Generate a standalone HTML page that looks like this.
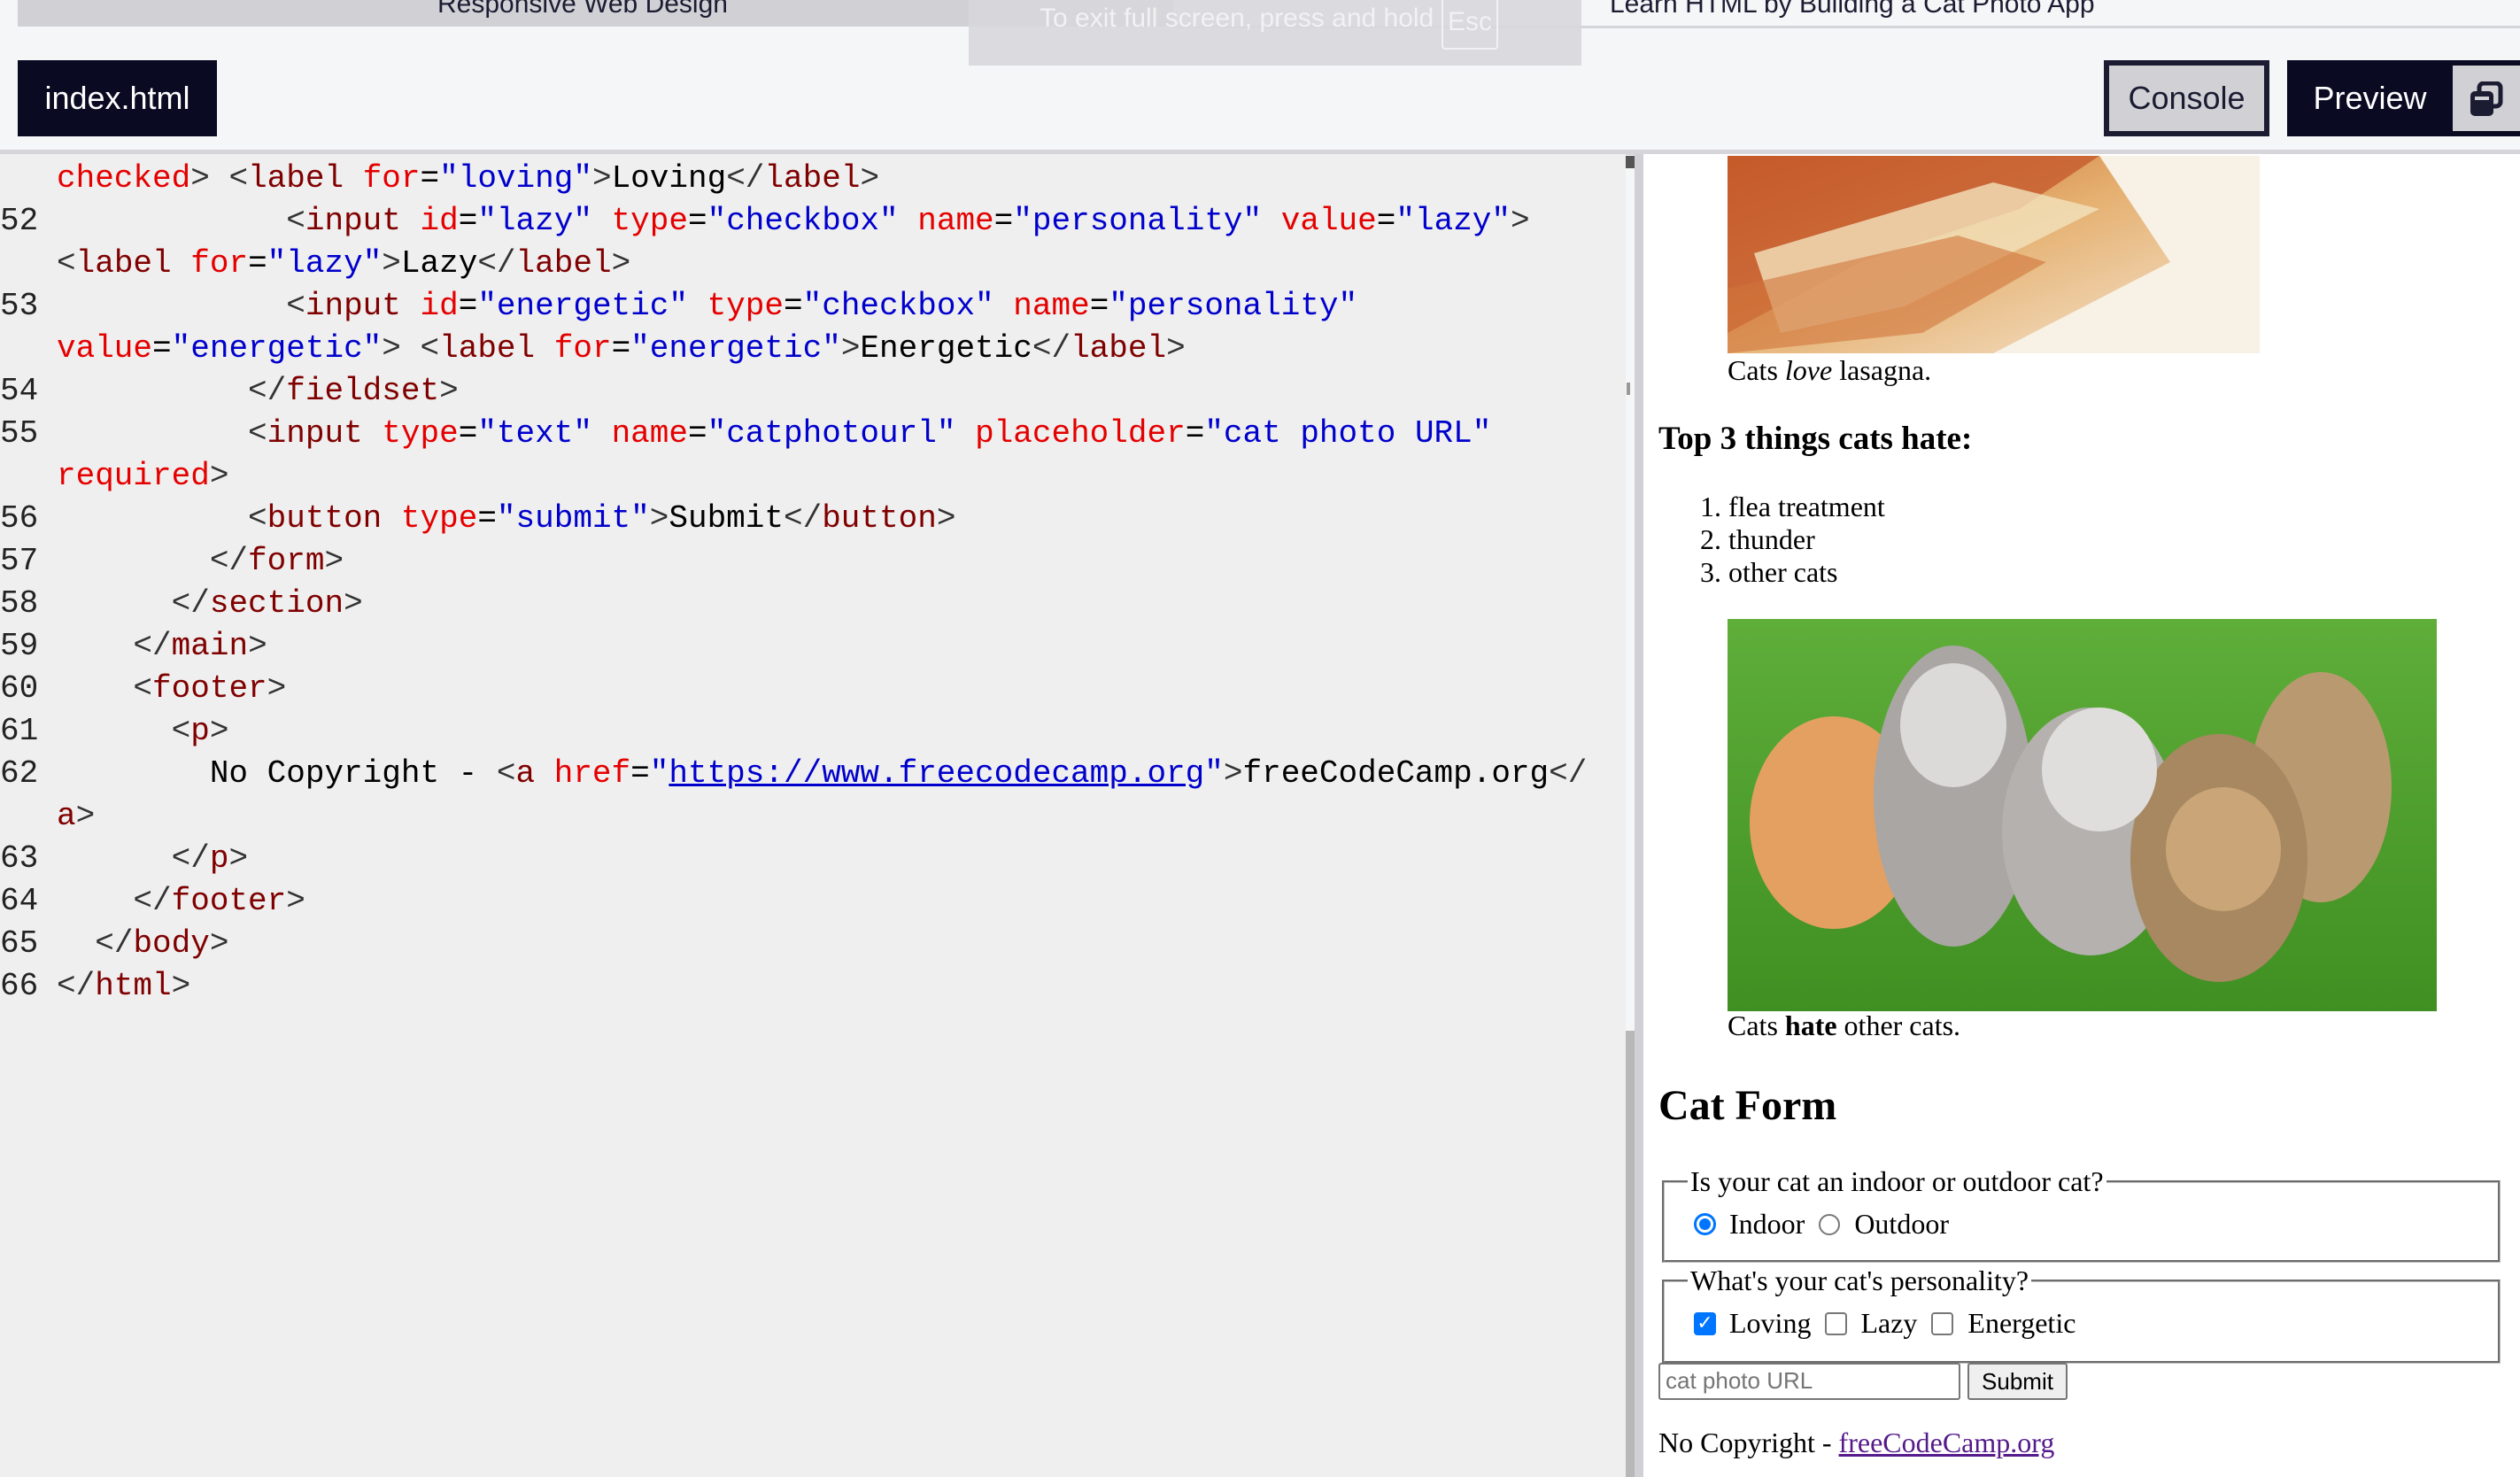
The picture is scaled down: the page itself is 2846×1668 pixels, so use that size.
<!DOCTYPE html>
<html><head><meta charset="utf-8"><style>
*{margin:0;padding:0;box-sizing:border-box}
body{width:2846px;height:1668px;overflow:hidden;background:#f5f6f7;position:relative;font-family:"Liberation Sans",sans-serif}
.abs{position:absolute}
.code{position:absolute;left:0;top:174px;width:1836px;height:1494px;background:#efefef;font-family:"Liberation Mono","DejaVu Sans Mono",monospace;font-size:36px;line-height:48px;color:#000;overflow:hidden;padding-top:4px}
.code div{height:48px;white-space:pre}
.n{display:inline-block;width:64px;color:#222}
.t{color:#800000}.a{color:#e50000}.v{color:#0000cd}.p{color:#333}
.pv{position:absolute;left:1856px;top:174px;width:990px;height:1494px;background:#fff;font-family:"Liberation Serif",serif;color:#000;font-size:32px;overflow:hidden}
.btn{position:absolute;font-size:36px;display:flex;align-items:center;justify-content:center}
.row{position:absolute;display:flex;align-items:center}
</style></head><body>
<div class="abs" style="left:20px;top:0;width:1305px;height:30px;background:#d0d0d5"></div>
<div class="abs" style="left:1325px;top:29px;width:1521px;height:3px;background:#d6d6da"></div>
<div class="abs" style="left:494px;top:-12px;font-size:30px;color:#1b1b32">Responsive Web Design</div>
<div class="abs" style="left:1818px;top:-12px;font-size:30px;color:#1b1b32">Learn HTML by Building a Cat Photo App</div>
<div class="abs" style="left:1094px;top:0;width:692px;height:74px;background:rgba(215,215,220,0.9)"></div>
<div class="abs" style="left:1174px;top:4px;font-size:30px;color:#f2f2f4">To exit full screen, press and hold</div>
<div class="abs" style="left:1628px;top:-4px;width:64px;height:60px;border:2px solid #f2f2f4;border-radius:4px;font-size:30px;color:#f2f2f4;text-align:center;line-height:54px">Esc</div>
<div class="btn" style="left:20px;top:68px;width:225px;height:86px;background:#0a0a23;color:#fff">index.html</div>
<div class="btn" style="left:2376px;top:68px;width:187px;height:86px;background:#d0d0d5;border:6px solid #1b1b32;color:#1b1b32">Console</div>
<div class="btn" style="left:2583px;top:68px;width:187px;height:86px;background:#0a0a23;color:#fff">Preview</div>
<div class="abs" style="left:2768px;top:68px;width:78px;height:86px;background:#0a0a23"></div>
<div class="abs" style="left:2770px;top:74px;width:76px;height:74px;background:#d0d0d5"></div>
<svg class="abs" style="left:2788px;top:92px" width="40" height="40" viewBox="0 0 40 40"><rect x="12" y="2" width="24" height="26" rx="5" fill="none" stroke="#1b1b32" stroke-width="5"/><rect x="2" y="11" width="26" height="28" rx="5" fill="#1b1b32"/><rect x="7" y="17" width="16" height="4" fill="#d0d0d5"/></svg>
<div class="abs" style="left:0;top:169px;width:2846px;height:6px;background:#d6d6da"></div>
<div class="code"><div><span class="n"> </span><span class="a">checked</span><span class="p">&gt;</span> <span class="p">&lt;</span><span class="t">label</span> <span class="a">for</span>=<span class="v">"loving"</span><span class="p">&gt;</span>Loving<span class="p">&lt;/</span><span class="t">label</span><span class="p">&gt;</span></div><div><span class="n">52</span>            <span class="p">&lt;</span><span class="t">input</span> <span class="a">id</span>=<span class="v">"lazy"</span> <span class="a">type</span>=<span class="v">"checkbox"</span> <span class="a">name</span>=<span class="v">"personality"</span> <span class="a">value</span>=<span class="v">"lazy"</span><span class="p">&gt;</span></div><div><span class="n"> </span><span class="p">&lt;</span><span class="t">label</span> <span class="a">for</span>=<span class="v">"lazy"</span><span class="p">&gt;</span>Lazy<span class="p">&lt;/</span><span class="t">label</span><span class="p">&gt;</span></div><div><span class="n">53</span>            <span class="p">&lt;</span><span class="t">input</span> <span class="a">id</span>=<span class="v">"energetic"</span> <span class="a">type</span>=<span class="v">"checkbox"</span> <span class="a">name</span>=<span class="v">"personality"</span></div><div><span class="n"> </span><span class="a">value</span>=<span class="v">"energetic"</span><span class="p">&gt;</span> <span class="p">&lt;</span><span class="t">label</span> <span class="a">for</span>=<span class="v">"energetic"</span><span class="p">&gt;</span>Energetic<span class="p">&lt;/</span><span class="t">label</span><span class="p">&gt;</span></div><div><span class="n">54</span>          <span class="p">&lt;/</span><span class="t">fieldset</span><span class="p">&gt;</span></div><div><span class="n">55</span>          <span class="p">&lt;</span><span class="t">input</span> <span class="a">type</span>=<span class="v">"text"</span> <span class="a">name</span>=<span class="v">"catphotourl"</span> <span class="a">placeholder</span>=<span class="v">"cat photo URL"</span></div><div><span class="n"> </span><span class="a">required</span><span class="p">&gt;</span></div><div><span class="n">56</span>          <span class="p">&lt;</span><span class="t">button</span> <span class="a">type</span>=<span class="v">"submit"</span><span class="p">&gt;</span>Submit<span class="p">&lt;/</span><span class="t">button</span><span class="p">&gt;</span></div><div><span class="n">57</span>        <span class="p">&lt;/</span><span class="t">form</span><span class="p">&gt;</span></div><div><span class="n">58</span>      <span class="p">&lt;/</span><span class="t">section</span><span class="p">&gt;</span></div><div><span class="n">59</span>    <span class="p">&lt;/</span><span class="t">main</span><span class="p">&gt;</span></div><div><span class="n">60</span>    <span class="p">&lt;</span><span class="t">footer</span><span class="p">&gt;</span></div><div><span class="n">61</span>      <span class="p">&lt;</span><span class="t">p</span><span class="p">&gt;</span></div><div><span class="n">62</span>        No Copyright - <span class="p">&lt;</span><span class="t">a</span> <span class="a">href</span>=<span class="v">"<u>https://www.freecodecamp.org</u>"</span><span class="p">&gt;</span>freeCodeCamp.org<span class="p">&lt;/</span></div><div><span class="n"> </span><span class="t">a</span><span class="p">&gt;</span></div><div><span class="n">63</span>      <span class="p">&lt;/</span><span class="t">p</span><span class="p">&gt;</span></div><div><span class="n">64</span>    <span class="p">&lt;/</span><span class="t">footer</span><span class="p">&gt;</span></div><div><span class="n">65</span>  <span class="p">&lt;/</span><span class="t">body</span><span class="p">&gt;</span></div><div><span class="n">66</span><span class="p">&lt;/</span><span class="t">html</span><span class="p">&gt;</span></div></div>
<div class="abs" style="left:1836px;top:176px;width:10px;height:14px;background:#555"></div>
<div class="abs" style="left:1837px;top:432px;width:4px;height:14px;background:#999"></div>
<div class="abs" style="left:1836px;top:1164px;width:10px;height:504px;background:#b8b8b8"></div>
<div class="abs" style="left:1846px;top:174px;width:10px;height:1494px;background:#d0d0d5"></div>
<div class="pv">
<svg class="abs" style="left:95px;top:2px" width="601" height="223" viewBox="0 0 601 223">
<defs><linearGradient id="lg" x1="0" y1="0" x2="1" y2="1"><stop offset="0" stop-color="#c9672a"/><stop offset="0.45" stop-color="#e5b070"/><stop offset="1" stop-color="#f6ead8"/></linearGradient></defs>
<rect width="601" height="223" fill="url(#lg)"/>
<path d="M0 0 L420 0 L330 60 L150 120 L0 200Z" fill="#c4552a" opacity="0.75"/>
<path d="M30 110 L300 30 L420 60 L200 170 L60 200Z" fill="#f3e2bd" opacity="0.8"/>
<path d="M0 150 L260 90 L360 120 L220 200 L0 223Z" fill="#d0753a" opacity="0.6"/>
<path d="M420 0 L601 0 L601 223 L300 223 L500 120Z" fill="#f8f1e6"/>
</svg>
<div class="abs" style="left:95px;top:226px">Cats <i>love</i> lasagna.</div>
<div class="abs" style="left:17px;top:300px;font-size:37px;font-weight:bold">Top 3 things cats hate:</div>
<div class="abs" style="left:64px;top:380px;line-height:37px">1. flea treatment<br>2. thunder<br>3. other cats</div>
<svg class="abs" style="left:95px;top:525px" width="801" height="443" viewBox="0 0 801 443">
<defs><linearGradient id="gg" x1="0" y1="0" x2="0" y2="1"><stop offset="0" stop-color="#5fae3a"/><stop offset="1" stop-color="#3f8f22"/></linearGradient></defs>
<rect width="801" height="443" fill="url(#gg)"/>
<ellipse cx="120" cy="230" rx="95" ry="120" fill="#e4a060"/>
<ellipse cx="255" cy="200" rx="90" ry="170" fill="#a9a6a4"/>
<ellipse cx="410" cy="240" rx="100" ry="140" fill="#b4b1ae"/>
<ellipse cx="670" cy="190" rx="80" ry="130" fill="#b99a70"/>
<ellipse cx="555" cy="270" rx="100" ry="140" fill="#a78860"/>
<ellipse cx="255" cy="120" rx="60" ry="70" fill="#dcdad8"/>
<ellipse cx="420" cy="170" rx="65" ry="70" fill="#e0dedc"/>
<ellipse cx="560" cy="260" rx="65" ry="70" fill="#caa577"/>
</svg>
<div class="abs" style="left:95px;top:966px">Cats <b>hate</b> other cats.</div>
<div class="abs" style="left:17px;top:1047px;font-size:48px;font-weight:bold">Cat Form</div>
<fieldset class="abs" style="left:21px;top:1142px;width:947px;height:110px;border:3px groove #c0c0c0;padding:0 26px"><legend style="padding:0 3px;margin-left:0">Is your cat an indoor or outdoor cat?</legend></fieldset>
<div class="row" style="left:57px;top:1190px">
<span style="width:25px;height:25px;border-radius:50%;border:3px solid #0075ff;display:inline-block;position:relative"><span style="position:absolute;left:3px;top:3px;width:13px;height:13px;border-radius:50%;background:#0075ff"></span></span>
<span style="margin:0 16px 0 15px">Indoor</span>
<span style="width:24px;height:24px;border-radius:50%;border:2px solid #777;display:inline-block"></span>
<span style="margin-left:16px">Outdoor</span></div>
<fieldset class="abs" style="left:21px;top:1254px;width:947px;height:112px;border:3px groove #c0c0c0;padding:0 26px"><legend style="padding:0 3px;margin-left:0">What's your cat's personality?</legend></fieldset>
<div class="row" style="left:57px;top:1302px">
<span style="width:25px;height:26px;border-radius:4px;background:#0075ff;color:#fff;font:bold 22px 'DejaVu Sans';display:inline-flex;align-items:center;justify-content:center">✓</span>
<span style="margin:0 16px 0 15px">Loving</span>
<span style="width:25px;height:26px;border-radius:4px;border:2px solid #777;display:inline-block"></span>
<span style="margin:0 16px 0 15px">Lazy</span>
<span style="width:25px;height:26px;border-radius:4px;border:2px solid #777;display:inline-block"></span>
<span style="margin-left:16px">Energetic</span></div>
<div class="abs" style="left:17px;top:1365px;width:341px;height:42px;border:2px solid #767676;border-radius:3px;font-family:'Liberation Sans';font-size:26px;color:#757575;padding:3px 6px">cat photo URL</div>
<div class="abs" style="left:366px;top:1365px;width:113px;height:42px;border:2px solid #767676;border-radius:3px;background:#efefef;font-family:'Liberation Sans';font-size:26px;color:#000;text-align:center;line-height:38px">Submit</div>
<div class="abs" style="left:17px;top:1437px">No Copyright - <a style="color:#551a8b;text-decoration:underline">freeCodeCamp.org</a></div>
</div>
</body></html>
